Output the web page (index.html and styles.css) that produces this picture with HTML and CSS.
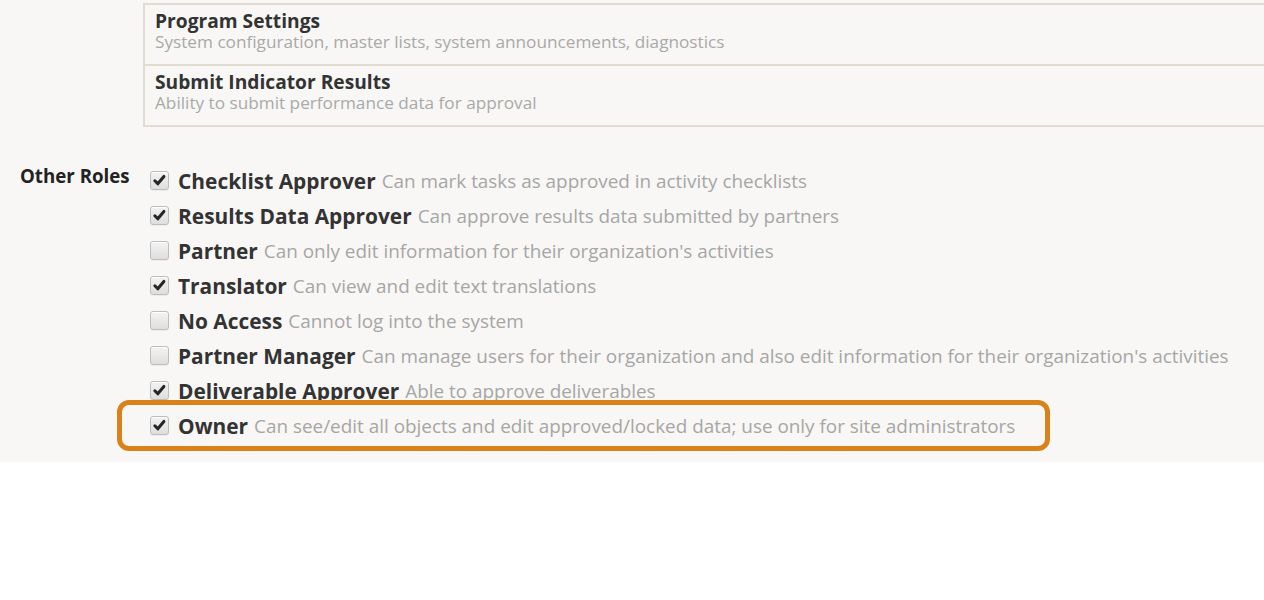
FILE: index.html
```html
<!DOCTYPE html>
<html>
<head>
<meta charset="utf-8">
<link rel="stylesheet" href="styles.css">
</head>
<body>
<div class="page">
  <div class="perm-list">
    <div class="perm-row">
      <div class="perm-title">Program Settings</div>
      <div class="perm-desc">System configuration, master lists, system announcements, diagnostics</div>
    </div>
    <div class="perm-row">
      <div class="perm-title">Submit Indicator Results</div>
      <div class="perm-desc">Ability to submit performance data for approval</div>
    </div>
  </div>

  <div class="roles">
    <div class="roles-label">Other Roles</div>
    <div class="roles-list">
      <div class="role"><span class="cb checked"><svg viewBox="0 0 19 19"><path d="M4.3 9.8 L7.6 13.2 L14.4 5" /></svg></span><span class="role-name">Checklist Approver</span><span class="role-desc">Can mark tasks as approved in activity checklists</span></div>
      <div class="role"><span class="cb checked"><svg viewBox="0 0 19 19"><path d="M4.3 9.8 L7.6 13.2 L14.4 5" /></svg></span><span class="role-name">Results Data Approver</span><span class="role-desc">Can approve results data submitted by partners</span></div>
      <div class="role"><span class="cb"></span><span class="role-name">Partner</span><span class="role-desc">Can only edit information for their organization's activities</span></div>
      <div class="role"><span class="cb checked"><svg viewBox="0 0 19 19"><path d="M4.3 9.8 L7.6 13.2 L14.4 5" /></svg></span><span class="role-name">Translator</span><span class="role-desc">Can view and edit text translations</span></div>
      <div class="role"><span class="cb"></span><span class="role-name">No Access</span><span class="role-desc">Cannot log into the system</span></div>
      <div class="role"><span class="cb"></span><span class="role-name">Partner Manager</span><span class="role-desc">Can manage users for their organization and also edit information for their organization's activities</span></div>
      <div class="role"><span class="cb checked"><svg viewBox="0 0 19 19"><path d="M4.3 9.8 L7.6 13.2 L14.4 5" /></svg></span><span class="role-name">Deliverable Approver</span><span class="role-desc">Able to approve deliverables</span></div>
      <div class="role highlight"><span class="cb checked"><svg viewBox="0 0 19 19"><path d="M4.3 9.8 L7.6 13.2 L14.4 5" /></svg></span><span class="role-name">Owner</span><span class="role-desc">Can see/edit all objects and edit approved/locked data; use only for site administrators</span></div>
    </div>
  </div>
</div>
</body>
</html>
```

FILE: styles.css
```css
html, body {
  margin: 0;
  padding: 0;
  background: #ffffff;
  font-family: "Open Sans", "Noto Sans", sans-serif;
}

.page {
  background: #f8f7f5;
  height: 462px;
  padding-top: 3px;
  box-sizing: border-box;
  overflow: hidden;
}

.perm-list {
  margin-left: 143px;
  border-left: 2px solid #e2dbd1;
  border-top: 2px solid #e2dbd1;
}

.perm-row {
  border-bottom: 2px solid #e2dbd1;
  padding: 4px 10px 0 10px;
  box-sizing: border-box;
  height: 61px;
  white-space: nowrap;
}

.perm-title {
  font-size: 19.2px;
  font-weight: 700;
  color: #333333;
  line-height: 24px;
}

.perm-desc {
  font-size: 17.2px;
  color: #a9a9a9;
  line-height: 18px;
}

.roles {
  display: flex;
  padding-left: 20px;
  margin-top: 36px;
}

.roles-label {
  width: 130px;
  flex: none;
  font-size: 18.7px;
  font-weight: 700;
  color: #222222;
  line-height: 22px;
  padding-top: 2px;
  white-space: nowrap;
}

.roles-list {
  display: flex;
  flex-direction: column;
}

.role {
  position: relative;
  display: flex;
  align-items: center;
  height: 35px;
  white-space: nowrap;
}

.cb {
  width: 19px;
  height: 19px;
  box-sizing: border-box;
  border: 1px solid #bdbdbd;
  border-radius: 3px;
  background: linear-gradient(#f3f3f3, #dedede);
  box-shadow: inset 0 1px 0 #ffffff, 0 1px 0 #ebebeb;
  margin-right: 9px;
  flex: none;
  display: flex;
}

.cb svg {
  width: 17px;
  height: 17px;
}

.cb svg path {
  fill: none;
  stroke: #262626;
  stroke-width: 3.4px;
  stroke-linecap: round;
  stroke-linejoin: round;
}

.role-name {
  font-size: 20.9px;
  font-weight: 700;
  color: #333333;
  margin-right: 6px;
}

.role-desc {
  font-size: 18.9px;
  color: #a6a6a6;
}

.highlight::after {
  content: "";
  position: absolute;
  left: -33px;
  top: -8px;
  width: 933px;
  height: 51px;
  box-sizing: border-box;
  border: 5px solid #d9821a;
  border-radius: 12px;
  pointer-events: none;
}
```
